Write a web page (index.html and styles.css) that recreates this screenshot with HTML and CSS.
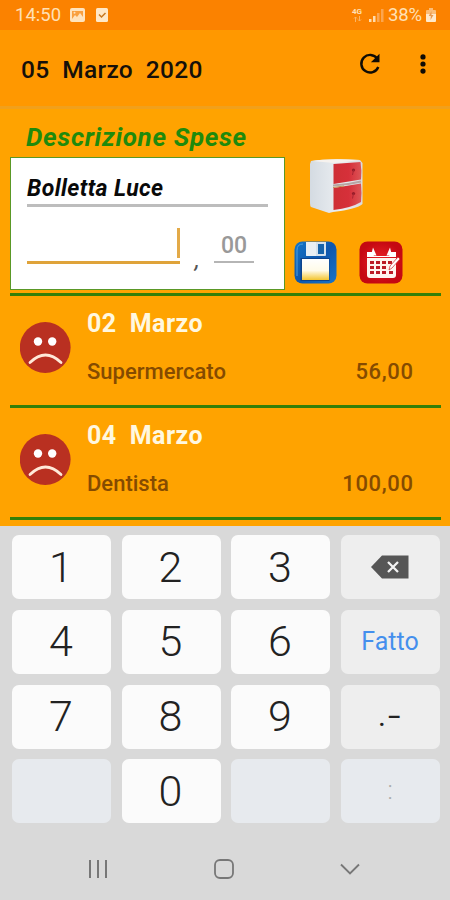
FILE: index.html
```html
<!DOCTYPE html>
<html lang="it">
<head>
<meta charset="utf-8">
<title>Spese</title>
<link rel="stylesheet" href="styles.css">
</head>
<body>
<div class="status">
  <span class="clock">14:50</span>
  <svg class="s-img" width="15" height="14" viewBox="0 0 15 14"><rect width="15" height="14" rx="2" fill="#ffe3bd"/><path d="M2 3h11v8H2z" fill="#f9a040"/><path d="M2 11l3-4 2 2 3-4 3 4v2z" fill="#ffe3bd"/><circle cx="4.500" cy="4.800" r="1" fill="#ffe3bd"/></svg>
  <svg class="s-check" width="12" height="14" viewBox="0 0 12 14"><rect width="12" height="14" rx="1.500" fill="#ffe8c8"/><path d="M3 6.500l2.500 2.500 4-4" fill="none" stroke="#c87820" stroke-width="1.500"/></svg>
  <span class="net"><span class="net-label">4G</span><svg width="9" height="6" viewBox="0 0 9 6"><path d="M2.500 6V1M1 2.500L2.500 1 4 2.500M6.500 0v5M5 3.500L6.500 5 8 3.500" fill="none" stroke="#fbb565"/></svg></span>
  <svg class="s-sig" width="15" height="13" viewBox="0 0 15 13"><path d="M0 10h2.500v3H0zM4 7h2.500v6H4z" fill="#ffdcae"/><path d="M8 4h2.500v9H8zM12 0h2.500v13H12z" fill="#fba550"/></svg>
  <span class="pct">38%</span>
  <svg class="s-bat" width="10" height="14" viewBox="0 0 10 14"><path d="M3 0h4v2h2q1 0 1 1v3H0V3q0-1 1-1h2z" fill="#fbbd78"/><path d="M0 6h10v7q0 1-1 1H1q-1 0-1-1z" fill="#ffe9cc"/><path d="M5.500 3L2.800 8h2L4.500 12 7.500 7h-2z" fill="#e89a50"/></svg>
</div>
<header class="bar">
  <h1 class="title">05  Marzo  2020</h1>
  <svg class="refresh" width="22" height="22" viewBox="0 0 22 22"><path d="M18.300 5.600A8.800 8.800 0 1 0 19.300 14" fill="none" stroke="#100c05" stroke-width="2.400"/><path d="M20.500.700v8.600h-8.600z" fill="#100c05"/></svg>
  <svg class="more" width="6" height="20" viewBox="0 0 6 20"><g fill="#100c05"><circle cx="3" cy="2.900" r="2.600"/><circle cx="3" cy="10" r="2.600"/><circle cx="3" cy="17.100" r="2.600"/></g></svg>
</header>
<main class="main">
  <h2 class="heading">Descrizione Spese</h2>
  <section class="entry">
    <div class="form">
      <div class="desc">Bolletta Luce</div>
      <div class="amount">
        <div class="euro"><i class="caret"></i></div>
        <span class="comma">,</span>
        <div class="cents">00</div>
      </div>
    </div>
    <div class="tools">
      <svg class="cabinet" width="55" height="55" viewBox="0 0 55 55">
        <defs><linearGradient id="cab" x2="1"><stop stop-color="#d4dbe2"/><stop offset=".6" stop-color="#eceff2"/><stop offset="1" stop-color="#dadade"/></linearGradient><linearGradient id="dr" x2="1"><stop stop-color="#cf2f35"/><stop offset=".55" stop-color="#d6303a"/><stop offset="1" stop-color="#dc5557"/></linearGradient></defs>
        <path d="M2 2Q18-1 51 1L53.500 4V45Q48 50 24 53L20 54 2 48Q1 47 1 44V5z" fill="url(#cab)"/>
        <path d="M3 2Q20-1 51 1L25 4z" fill="#f6f2ee"/>
        <path d="M24.500 5L51.500 3Q53 12 52 20.500L24.500 25z" fill="url(#dr)"/>
        <path d="M24.500 29L52 24.500Q53 35 52 43 42 49 24.500 51z" fill="url(#dr)"/>
        <path d="M24 26.500Q38 26 52 22.500" fill="none" stroke="#b7a5a3" stroke-width="2"/>
        <path d="M24 28.500L35 27" stroke="#c29050" stroke-width="1"/>
        <circle cx="44.500" cy="11" r="1.600" fill="#941c28"/><circle cx="44.500" cy="34.500" r="1.600" fill="#941c28"/>
        <path d="M44.500 11l-1 5M44.500 34.500l-1 5" stroke="#a82532"/>
      </svg>
      <div class="pair">
        <svg width="43" height="43" viewBox="0 0 43 43">
          <defs><linearGradient id="fl" x2="1" y2="1"><stop stop-color="#1576c8"/><stop offset=".5" stop-color="#0e56ad"/><stop offset="1" stop-color="#1975c9"/></linearGradient><linearGradient id="lb" y2="1" x2="0"><stop stop-color="#fff"/><stop offset=".55" stop-color="#fffbe8"/><stop offset="1" stop-color="#f3c52f"/></linearGradient></defs>
          <rect x=".5" y=".5" width="42" height="42" rx="8" fill="url(#fl)"/>
          <path d="M3 35V9q0-6 6-6" fill="none" stroke="#4da0df" stroke-width="1"/>
          <path d="M12 1h20v13q0 1-1 1H13q-1 0-1-1z" fill="#d5e1ec"/><path d="M12 1h10v14h-9q-1 0-1-1z" fill="#e9eff4"/>
          <rect x="24" y="3" width="6" height="10" fill="#1763aa"/>
          <rect x="6.500" y="17" width="29" height="23" fill="#0d438c"/>
          <rect x="8" y="18" width="27" height="21" fill="url(#lb)"/>
        </svg>
        <svg width="44" height="43" viewBox="0 0 44 43">
          <defs><radialGradient id="cl"><stop stop-color="#ed2428"/><stop offset="1" stop-color="#c50812"/></radialGradient></defs>
          <rect x=".5" y=".5" width="43" height="42" rx="8" fill="url(#cl)"/>
          <path d="M8 11h5l2 4h15l2-4h5v5H8z" fill="#fff"/><path d="M8 17h29v17q0 3-3 3H11q-3 0-3-3z" fill="#fff5ee"/>
          <path d="M14 6.500l-2 8h5.500zM31 6.500l-3.500 8h5.500z" fill="#fff"/>
          <g fill="#bc1c25"><path d="M11 20h4v3h-4zM17 20h4v3h-4zM23 20h4v3h-4zM29 20h4v3h-4zM11 25h4v3h-4zM17 25h4v3h-4zM23 25h4v3h-4zM11 30h4v3h-4zM17 30h4v3h-4zM23 30h4v3h-4zM30 30h4v3h-4z"/></g>
          <path d="M30 29l1-4 8-9 2 2-8 9z" fill="#fff" stroke="#d1242b" stroke-width=".7"/>
        </svg>
      </div>
    </div>
  </section>
  <ul class="list">
    <li class="item">
      <svg class="face" width="51" height="51" viewBox="0 0 51 51"><circle cx="25.200" cy="25.500" r="25.400" fill="#b93021"/><circle cx="18" cy="19.500" r="4.200" fill="#fff"/><circle cx="32.200" cy="19.500" r="4.200" fill="#fff"/><path d="M10 40.500Q25.500 25.500 41 40.500" fill="none" stroke="#ffe9d8" stroke-width="2.800" stroke-linecap="round"/></svg>
      <div class="text"><div class="day">02  Marzo</div><div class="line"><span class="n1">Supermercato</span><span class="sum">56,00</span></div></div>
    </li>
    <li class="item">
      <svg class="face" width="51" height="51" viewBox="0 0 51 51"><circle cx="25.200" cy="25.500" r="25.400" fill="#b93021"/><circle cx="18" cy="19.500" r="4.200" fill="#fff"/><circle cx="32.200" cy="19.500" r="4.200" fill="#fff"/><path d="M10 40.500Q25.500 25.500 41 40.500" fill="none" stroke="#ffe9d8" stroke-width="2.800" stroke-linecap="round"/></svg>
      <div class="text"><div class="day">04  Marzo</div><div class="line"><span class="n2">Dentista</span><span class="sum">100,00</span></div></div>
    </li>
  </ul>
</main>
<div class="keyboard">
  <div class="keys">
    <div class="key">1</div><div class="key">2</div><div class="key">3</div>
    <div class="key fn"><svg width="38" height="24" viewBox="0 0 38 24"><path d="M0 12L11 .500h26.500v23H11z" fill="#565656"/><path d="M17 7l10 10M27 7L17 17" stroke="#f2f2f2" stroke-width="2.300"/></svg></div>
    <div class="key">4</div><div class="key">5</div><div class="key">6</div><div class="key fn done">Fatto</div>
    <div class="key">7</div><div class="key">8</div><div class="key">9</div><div class="key fn punct"><span>.</span><span class="dash">-</span></div>
    <div class="key off"></div><div class="key">0</div><div class="key off"></div><div class="key off colon">:</div>
  </div>
  <nav class="nav">
    <svg width="20" height="20" viewBox="0 0 20 20"><path d="M2 1v18M10 1v18M18 1v18" stroke="#777" stroke-width="2"/></svg>
    <svg width="20" height="20" viewBox="0 0 20 20"><rect x="1" y="1" width="18" height="18" rx="5" fill="none" stroke="#777" stroke-width="1.800"/></svg>
    <svg width="20" height="20" viewBox="0 0 20 20"><path d="M1 5.500l9 9 9-9" fill="none" stroke="#777" stroke-width="1.900"/></svg>
  </nav>
</div>
</body>
</html>
```
FILE: styles.css
```css
* { box-sizing: border-box; }
body { margin: 0; width: 450px; height: 900px; overflow: hidden; background: #ffa300; font-family: Roboto, "Liberation Sans", sans-serif; }
h1, h2, ul { margin: 0; padding: 0; list-style: none; }
svg { display: block; flex: none; }

.status { height: 30px; background: #fb8200; display: flex; align-items: center; padding: 0 12px 0 15px; color: #ffe0b5; font-size: 18.500px; }
.clock { width: 46px; line-height: 30px; }
.s-img { margin-left: 9px; }
.s-check { margin-left: 11px; }
.net { margin-left: auto; width: 12px; display: flex; flex-direction: column; align-items: center; }
.net-label { font-size: 8px; line-height: 8px; font-weight: 700; }
.s-sig { margin-left: 6px; }
.pct { margin-left: 4px; letter-spacing: -.2px; width: 36px; }
.s-bat { margin-left: 2px; margin-right: 2px; }

.bar { height: 79px; background: #ff9800; border-bottom: 3px solid #f1a01c; display: flex; align-items: flex-start; padding: 0 24px 0 21px; }
.title { flex: 1; white-space: pre; font-size: 24.500px; font-weight: 500; letter-spacing: .3px; line-height: 80px; color: #15100a; }
.refresh { margin: 23px 39px 0 0; }
.more { margin-top: 24px; }

.main { height: 417px; padding: 0 9px 0 10px; }
.heading { height: 48px; padding-left: 16px; font-size: 26px; font-style: italic; font-weight: 700; letter-spacing: .65px; line-height: 56px; color: #1f8a0c; }
.entry { display: flex; height: 134px; }
.form { width: 275px; height: 133px; padding: 0 16px; background: #fff; border: 1px solid #5a9826; }
.desc { height: 49px; padding-top: 13px; border-bottom: 3px solid #bdbdbd; font-size: 23px; font-style: italic; font-weight: 700; letter-spacing: .4px; line-height: 36px; color: #090909; }
.amount { display: flex; height: 80px; }
.euro { width: 153px; height: 57px; border-bottom: 3px solid #dfa33a; display: flex; justify-content: flex-end; align-items: flex-end; }
.caret { width: 3px; height: 30px; margin-bottom: 3px; background: #e3aa48; }
.comma { width: 34px; padding-left: 15px; font-size: 24px; font-style: italic; color: #555; line-height: 28px; margin-top: 39px; }
.cents { width: 40px; height: 56px; padding-top: 26px; border-bottom: 2px solid #b5b5b5; font-size: 23px; font-weight: 500; line-height: 26px; text-align: center; color: #999; }
.tools { padding: 1px 0 0 9px; }
.cabinet { margin: 1px 0 0 15px; }
.pair { display: flex; gap: 22px; margin-top: 27px; }

.list { margin-top: 2px; border-top: 3px solid #347f08; }
.item { display: flex; height: 112px; padding: 0 28px 0 10px; border-bottom: 3px solid #347f08; }
.face { margin-top: 26px; }
.text { flex: 1; padding-left: 16px; }
.day { height: 56px; white-space: pre; font-size: 25px; font-weight: 700; letter-spacing: .42px; line-height: 56px; color: #fff8e0; }
.line { display: flex; justify-content: space-between; font-size: 22px; font-weight: 500; line-height: 40px; color: #854b00; }
.sum { letter-spacing: .65px; margin-right: -.65px; }

.keyboard { height: 374px; background: #d9d9d9; padding: 9px 11px 0 12px; }
.keys { display: grid; grid-template-columns: repeat(4, 99px); grid-auto-rows: 64px; gap: 10.800px 10.500px; }
.key { display: flex; align-items: center; justify-content: center; border-radius: 7px; background: #fbfbfb; font-size: 43px; font-weight: 300; line-height: 60px; color: #222; }
.key:not(.fn):not(.off) { padding-right: 1px; padding-bottom: 1px; }
.fn { background: #eee; }
.off { background: #e7eaee; }
.done { font-size: 25px; font-weight: 400; color: #448fed; }
.punct { font-size: 30px; font-weight: 400; padding-right: 4px; padding-bottom: 2px; }
.dash { transform: scaleX(1.5); margin-left: 4px; }
.colon { font-size: 25px; color: #aaa; }
.nav { display: flex; justify-content: space-between; padding: 36px 79px 0 76px; }
```
